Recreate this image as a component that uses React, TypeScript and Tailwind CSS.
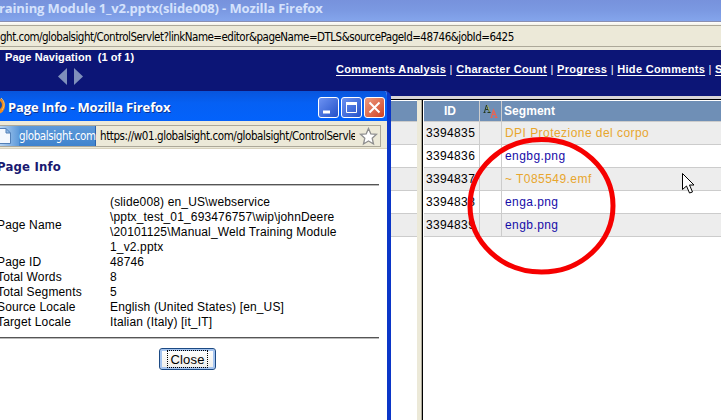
import React from "react";

const segments = [
  { id: "3394835", text: "DPI Protezione del corpo", cls: "text-[#e8a62e] tracking-[0.45px]" },
  { id: "3394836", text: "engbg.png", cls: "text-[#150ca8] tracking-[0.42px]" },
  { id: "3394837", text: "~ T085549.emf", cls: "text-[#e8a62e] tracking-[0.45px]" },
  { id: "3394838", text: "enga.png", cls: "text-[#150ca8] tracking-[0.42px]" },
  { id: "3394839", text: "engb.png", cls: "text-[#150ca8] tracking-[0.42px]" },
];

const facts = [
  ["Page ID", "48746"],
  ["Total Words", "8"],
  ["Total Segments", "5"],
  ["Source Locale", "English (United States) [en_US]"],
  ["Target Locale", "Italian (Italy) [it_IT]"],
];

const sans = "font-['Liberation_Sans',Arial,sans-serif]";
const tahoma = "font-['DejaVu_Sans_Condensed','DejaVu_Sans',sans-serif]";
const caption = "font-['Open_Sans','Noto_Sans',sans-serif] font-bold";

function NavLink({ children }: { children: string }) {
  return <a className="underline underline-offset-2">{children}</a>;
}

function MainWindow() {
  return (
    <div className="flex h-[420px] w-[721px] flex-col bg-white">
      <div className={`${caption} h-[21px] shrink-0 bg-linear-to-b from-[#7792dc] via-[#7b99e2] to-[#84a5ec] text-[13px] leading-[17px] whitespace-pre text-[#d5e2fc]`}>
        <span className="-ml-px tracking-[-0.12px]">raining Module 1_v2.pptx(slide008) - Mozilla Firefox</span>
      </div>
      <div className="h-[29px] shrink-0 border-t border-[#8a8fb0] bg-[#ece9d8]">
        <div className="h-[3px] bg-linear-to-b from-white to-[#f2f0e6]" />
        <div className={`${tahoma} h-[22px] border-y border-[#aca899] text-[11.5px] leading-[23px] whitespace-pre text-black`}>
          <span className="tracking-[-0.5px]">ght.com/globalsight/ControlServlet?linkName=editor&amp;pageName=DTLS&amp;sourcePageId=48746&amp;jobId=6425</span>
        </div>
      </div>
      <div className={`${sans} flex h-[46px] shrink-0 bg-[#0c1576] font-bold whitespace-pre text-white`}>
        <div className="w-[336px] shrink-0 pl-[5px]">
          <div className="h-[14px] text-[11px] leading-[15px] tracking-[0.06px]">Page Navigation  (1 of 1)</div>
          <div className="flex gap-1 pt-[2px] pl-[52px]">
            <svg width="12" height="20" viewBox="0 0 12 20"><path d="M10 2v17L1 10.500z" fill="#7f8fbb" /></svg>
            <svg width="12" height="20" viewBox="0 0 12 20"><path d="M1 2v17l9-8.500z" fill="#7f8fbb" /></svg>
          </div>
        </div>
        <div className="pt-[11px] text-[11px] leading-[16px] tracking-[0.32px]">
          <NavLink>Comments Analysis</NavLink>
          <span className="font-normal"> | </span>
          <NavLink>Character Count</NavLink>
          <span className="font-normal"> | </span>
          <NavLink>Progress</NavLink>
          <span className="font-normal"> | </span>
          <NavLink>Hide Comments</NavLink>
          <span className="font-normal"> | </span>
          <NavLink>S</NavLink>
        </div>
      </div>
      <div className="h-[3px] shrink-0 bg-[#d8d4d6]" />
      <div className="flex grow border-t border-black">
        <SourcePane />
        <div className="w-[5px] shrink-0 border-r border-[#aca899] bg-[#ece9d8]" />
        <div className="w-px shrink-0 bg-black" />
        <TargetPane />
      </div>
    </div>
  );
}

function SourcePane() {
  return (
    <div className="w-[417px] shrink-0 pt-px">
      <div className="h-[21px] border-b border-[#ccc] bg-[#6f8fb6]" />
      {segments.map((s) => (
        <div key={s.id} className="h-[23px] border-b border-[#ccc] odd:bg-white even:bg-[#ededed]" />
      ))}
    </div>
  );
}

function TargetPane() {
  return (
    <div className={`${sans} min-w-0 grow pt-px pl-px`}>
      <div className="flex h-[21px] border-b border-[#ccc] bg-[#6f8fb6] text-[12px] leading-[20px] font-bold text-white">
        <div className="w-[56px] shrink-0 border-r border-[#ccc] pr-[3px] text-center">ID</div>
        <div className="w-[22px] shrink-0 border-r border-[#ccc]">
          <svg width="21" height="20" viewBox="0 0 21 20" fill="none">
            <path d="M3.500 11.500h2m2 0h3M4.500 11l2-7l3 7M5.500 8.500h3" stroke="#26381c" />
            <path d="M7.500 4.500l2 6" stroke="#a6b565" />
            <path d="M10.500 16.500h2m2 0h3M11.500 16l2-7l3 7M12.500 13.500h3" stroke="#f0624e" strokeWidth="1.200" />
          </svg>
        </div>
        <div className="grow pl-[2px] tracking-[0.05px]">Segment</div>
      </div>
      {segments.map((s) => (
        <div key={s.id} className="flex h-[23px] border-b border-[#ccc] text-[12px] leading-[23px] whitespace-pre odd:bg-white even:bg-[#ededed]">
          <div className="w-[56px] shrink-0 border-r border-[#ccc] pl-[2px] tracking-[0.35px] text-black">{s.id}</div>
          <div className="w-[22px] shrink-0 border-r border-[#ccc]" />
          <div className={`grow pl-[3px] ${s.cls}`}>{s.text}</div>
        </div>
      ))}
    </div>
  );
}

function CaptionButton({ kind }: { kind: "min" | "max" | "close" }) {
  const fill = kind === "close" ? "from-[#ec9a80] to-[#cf3f1d]" : "from-[#6d92f2] to-[#2450c8]";
  return (
    <div className={`h-[21px] w-[21px] rounded-[3px] border border-white bg-linear-to-br ${fill}`}>
      <svg width="19" height="19" viewBox="0 0 19 19" fill="none" stroke="white">
        {kind === "min" && <path d="M4 14h7" strokeWidth="3" />}
        {kind === "max" && <path d="M4.500 5v9.500h10V5" />}
        {kind === "max" && <path d="M4 5.500h11" strokeWidth="3" />}
        {kind === "close" && <path d="M4.500 4.500l10 10M14.500 4.500l-10 10" strokeWidth="2" />}
      </svg>
    </div>
  );
}

function PageInfoWindow() {
  return (
    <div className="absolute top-[91px] left-0 flex h-[329px] w-[391px] flex-col overflow-hidden rounded-tr-[6px] border-r-[4px] border-[#0b36c8] bg-white">
      <div className="-mr-[4px] flex h-[30px] shrink-0 items-center bg-linear-to-b from-[#0855dc] via-[#0560f4] via-40% to-[#0362fb]">
        <svg width="6" height="18" viewBox="0 0 6 18">
          <circle cx="-3" cy="9" r="8" fill="#f08a1c" />
          <circle cx="-3" cy="8" r="5" fill="#154aa4" />
          <path d="M1 1c4 3 4 8 1 12" stroke="#f6c86a" fill="none" />
        </svg>
        <span className={`${caption} ml-[2px] grow pt-[2px] text-[13px] leading-[18px] tracking-[-0.15px] whitespace-pre text-white [text-shadow:1px_1px_0_#0a3390]`}>Page Info - Mozilla Firefox</span>
        <div className="flex gap-[2px] pt-[2px] pr-[6px]">
          <CaptionButton kind="min" />
          <CaptionButton kind="max" />
          <CaptionButton kind="close" />
        </div>
      </div>
      <div className="h-[28px] shrink-0 border-b border-[#d8d2bd] bg-[#ece9d8] pt-[4px] pr-[6px]">
        <div className={`${tahoma} flex h-[22px] border-y border-r border-[#aca899] text-[11.5px] leading-[21px] whitespace-pre`}>
          <div className="flex w-[96px] shrink-0 border-r border-[#2a62ad] bg-linear-to-b from-[#5d9ada] to-[#3f83cd] text-white">
            <div className="w-[19px] shrink-0 bg-linear-to-r from-[#b5d2f0] to-[#5d9ada]">
              <svg width="12" height="20" viewBox="0 0 12 20"><path d="M0 2.500h6l4.500 4.500v10.500H0M6 2.500V7h4.500" fill="#f4f9ff" stroke="#5280b8" /></svg>
            </div>
            <span className="tracking-[-0.38px]">globalsight.com</span>
          </div>
          <div className="w-[259px] shrink-0 overflow-hidden pl-[4px] tracking-[-0.41px] text-black">https://w01.globalsight.com/globalsight/ControlServle</div>
          <svg className="mt-px ml-[4px]" width="19" height="19" viewBox="0 0 19 19"><path d="M9.500 1.500l2.300 5.300 5.700.5-4.300 3.900 1.300 5.800-5-3-5 3 1.300-5.800L1.500 7.300l5.700-.5z" fill="#fff" stroke="#8f8f8f" strokeWidth="1.300" /></svg>
        </div>
      </div>
      <div className={`${sans} pr-[8px] text-black`}>
        <h1 className={`${tahoma} -ml-[3px] h-[35px] text-[13px] leading-[36px] font-bold tracking-[0.2px] text-[#191970]`}>Page Info</h1>
        <div className="h-[2px] border-t border-[#555] bg-[#bbb]" />
        <div className="mt-[9px] -ml-[3px] grid grid-cols-[113px_auto] text-[12px] leading-[15px] tracking-[0.15px] whitespace-pre">
          <div className="self-center">Page Name</div>
          <div>
            <div>(slide008) en_US\webservice</div>
            <div>\pptx_test_01_693476757\wip\johnDeere</div>
            <div>\20101125\Manual_Weld Training Module</div>
            <div>1_v2.pptx</div>
          </div>
          {facts.map(([label, value]) => (
            <React.Fragment key={label}>
              <div>{label}</div>
              <div>{value}</div>
            </React.Fragment>
          ))}
        </div>
        <div className="mt-[7px] h-[2px] border-t border-[#555] bg-[#bbb]" />
        <button className="mt-[9px] ml-[159px] flex h-[22px] w-[57px] items-center justify-center rounded-[3px] border border-[#1c4a84] bg-linear-to-b from-white to-[#eeeeea] shadow-[inset_0_0_0_2px_#a5c4ef]">
          <span className="h-[18px] w-[41px] border border-dotted border-black text-center text-[13px] leading-[17px] tracking-[0.2px]">Close</span>
        </button>
      </div>
    </div>
  );
}

export default function App() {
  return (
    <div className="relative h-[420px] w-[721px] overflow-hidden">
      <MainWindow />
      <PageInfoWindow />
      <svg className="absolute top-[130px] left-[460px]" width="250" height="150" viewBox="460 130 250 150" fill="none">
        <ellipse cx="541.500" cy="205.800" rx="71.500" ry="66.300" stroke="#f60000" strokeWidth="5" />
        <path d="M682.500 173.500v16l4-3.500 3 7 3-1-3-7h4.500z" fill="white" stroke="black" />
      </svg>
    </div>
  );
}
